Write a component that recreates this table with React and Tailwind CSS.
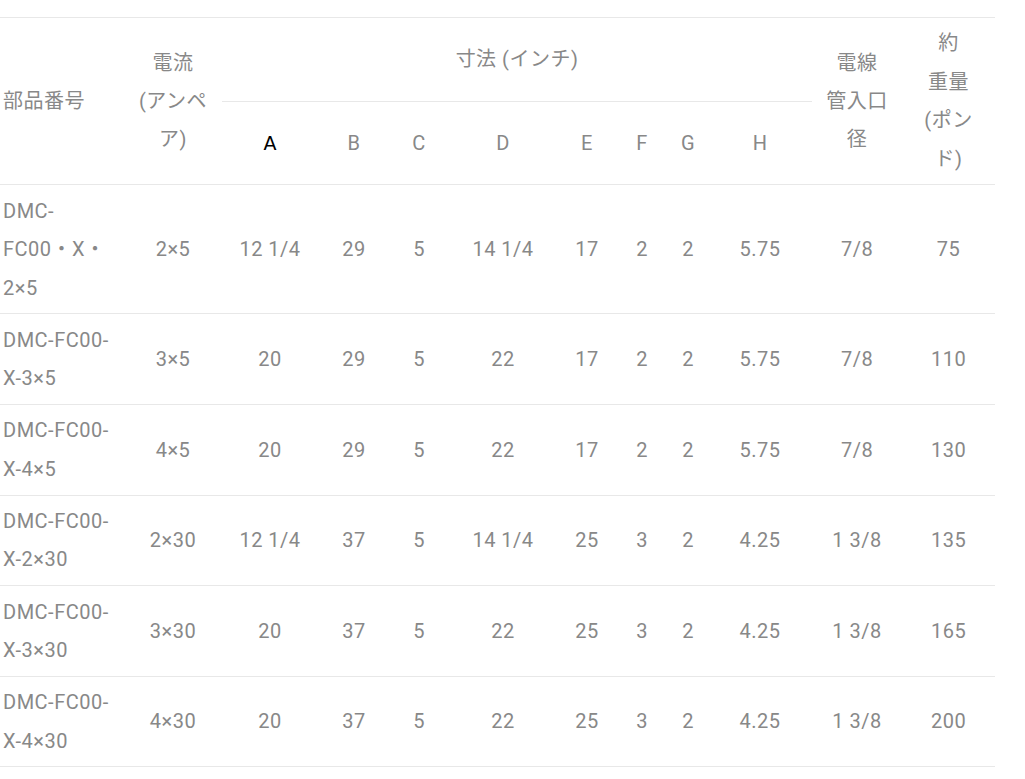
import React from 'react';

const rows = [
  { part: ['DMC-', 'FC00・X・', '2×5'], amp: '2×5', dims: ['12 1/4', '29', '5', '14 1/4', '17', '2', '2', '5.75'], conduit: '7/8', weight: '75' },
  { part: ['DMC-FC00-', 'X-3×5'], amp: '3×5', dims: ['20', '29', '5', '22', '17', '2', '2', '5.75'], conduit: '7/8', weight: '110' },
  { part: ['DMC-FC00-', 'X-4×5'], amp: '4×5', dims: ['20', '29', '5', '22', '17', '2', '2', '5.75'], conduit: '7/8', weight: '130' },
  { part: ['DMC-FC00-', 'X-2×30'], amp: '2×30', dims: ['12 1/4', '37', '5', '14 1/4', '25', '3', '2', '4.25'], conduit: '1 3/8', weight: '135' },
  { part: ['DMC-FC00-', 'X-3×30'], amp: '3×30', dims: ['20', '37', '5', '22', '25', '3', '2', '4.25'], conduit: '1 3/8', weight: '165' },
  { part: ['DMC-FC00-', 'X-4×30'], amp: '4×30', dims: ['20', '37', '5', '22', '25', '3', '2', '4.25'], conduit: '1 3/8', weight: '200' },
];

const colWidths = [124, 98, 96, 72, 58, 110, 58, 52, 40, 104, 90, 93];

const Lines = ({ items }) => (
  <>
    {items.map((t, i) => (
      <span key={i} className="block whitespace-nowrap">{t}</span>
    ))}
  </>
);

const cell = 'py-[6.4px] align-middle text-center font-normal';

export default function App() {
  return (
    <div className="bg-white min-h-screen pt-[17px] text-[#888] text-[20px] leading-[38.4px] tracking-[0.5px] font-['Roboto','Noto_Sans_CJK_JP',sans-serif]">
      <table className="table-fixed border-collapse w-[995px]">
        <colgroup>
          {colWidths.map((w, i) => (
            <col key={i} style={{ width: w }} />
          ))}
        </colgroup>
        <thead>
          <tr className="border-t border-[#e8e8e8] h-[83px]">
            <th rowSpan={2} className="py-[6.4px] pl-[3px] text-left align-middle font-normal border-b border-[#e8e8e8]">部品番号</th>
            <th rowSpan={2} className={`${cell} border-b border-[#e8e8e8]`}>
              <Lines items={['電流', '(アンペ', 'ア)']} />
            </th>
            <th colSpan={8} className={`${cell} border-b border-[#e8e8e8]`}>寸法 (インチ)</th>
            <th rowSpan={2} className={`${cell} border-b border-[#e8e8e8]`}>
              <Lines items={['電線', '管入口', '径']} />
            </th>
            <th rowSpan={2} className={`${cell} border-b border-[#e8e8e8]`}>
              <Lines items={['約', '重量', '(ポン', 'ド)']} />
            </th>
          </tr>
          <tr className="h-[83px] border-b border-[#e8e8e8]">
            <th className={`${cell} text-black text-[19px] tracking-normal font-['DejaVu_Sans',sans-serif]`}>A</th>
            {['B', 'C', 'D', 'E', 'F', 'G', 'H'].map((h) => (
              <th key={h} className={cell}>{h}</th>
            ))}
          </tr>
        </thead>
        <tbody>
          {rows.map((r, i) => (
            <tr key={i} className="border-b border-[#e8e8e8]">
              <td className="py-[6.4px] pl-[3px] text-left align-middle">
                <Lines items={r.part} />
              </td>
              <td className={cell}>{r.amp}</td>
              {r.dims.map((d, j) => (
                <td key={j} className={cell}>{d}</td>
              ))}
              <td className={cell}>{r.conduit}</td>
              <td className={cell}>{r.weight}</td>
            </tr>
          ))}
        </tbody>
      </table>
    </div>
  );
}
